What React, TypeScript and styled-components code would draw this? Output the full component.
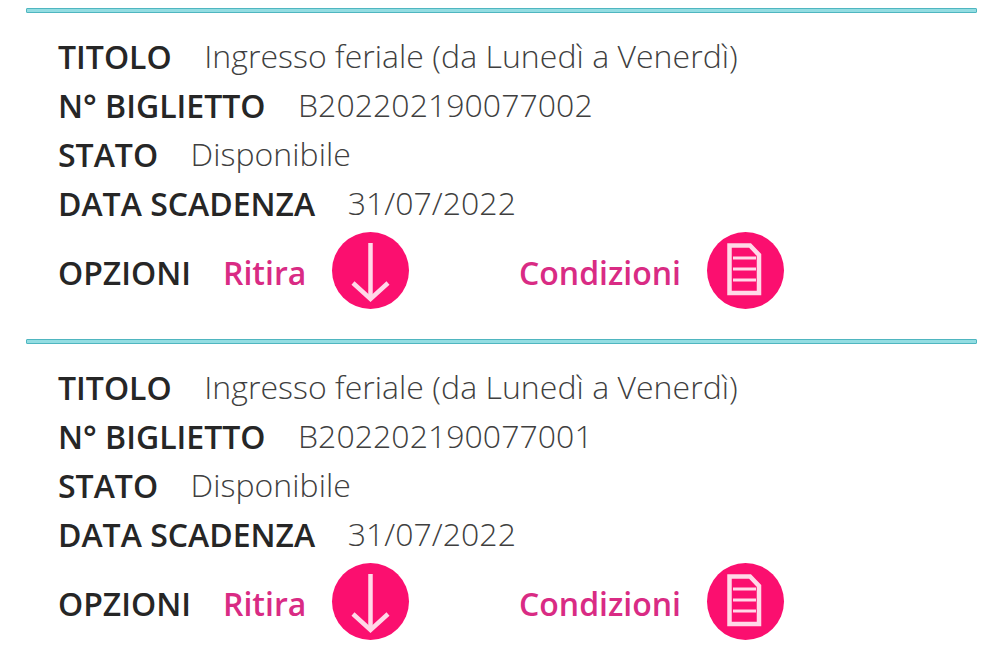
import styled, { createGlobalStyle } from 'styled-components';

const GlobalStyle = createGlobalStyle`
  html, body {
    margin: 0;
    padding: 0;
    background: #ffffff;
  }
`;

const Page = styled.div`
  width: 1000px;
  height: 651px;
  overflow: hidden;
  box-sizing: border-box;
  padding: 8px 23px 0 26px;
  font-family: 'Open Sans', 'Liberation Sans', sans-serif;
  font-size: 32px;
  color: #262626;
`;

const Ticket = styled.section`
  height: 331px;
`;

const Rule = styled.div`
  height: 5px;
  box-sizing: border-box;
  border: 1.5px solid #4fb6c0;
  border-radius: 1px;
  background: #93dde2;
`;

const Body = styled.div`
  padding: 19px 0 0 32px;
`;

const Row = styled.div`
  display: flex;
  align-items: center;
  height: 49px;
  gap: 32.5px;
  white-space: nowrap;
`;

const Label = styled.span`
  font-weight: 600;
`;

const Value = styled.span`
  font-weight: 300;
  color: #3f3f3f;
  margin-bottom: 2px;
  letter-spacing: 0.04px;
`;

const OptionsRow = styled.div`
  display: flex;
  align-items: center;
  margin-top: 4px;
  height: 77px;
  white-space: nowrap;
`;

const OptionsLabel = styled(Label)`
  width: 165px;
  margin-top: 3px;
`;

const Option = styled.div<{ $width: number }>`
  display: flex;
  align-items: center;
  justify-content: space-between;
  width: ${(p) => p.$width}px;
`;

const OptionText = styled.span`
  font-weight: 600;
  color: #d92b84;
  margin-top: 3px;
`;

const Spacer = styled.div`
  width: 110px;
`;

const Circle = styled.span`
  display: block;
  width: 77px;
  height: 77px;
  border-radius: 50%;
  background: #fb0f6f;
`;

const ArrowIcon = () => (
  <Circle>
    <svg width="77" height="77" viewBox="0 0 77 77" fill="none" stroke="#ffd9e8" strokeWidth="4.5">
      <path d="M38.500 11V66" />
      <path d="M21 51L38.500 67L56 51" />
    </svg>
  </Circle>
);

const DocIcon = () => (
  <Circle>
    <svg width="77" height="77" viewBox="0 0 77 77" fill="none" stroke="#ffd9e8" strokeWidth="4.5">
      <path d="M22.500 13.500H43L52 23V61H22.500Z" />
      <path d="M26 26H49M26 37H49M26 48H49" strokeWidth="3" />
    </svg>
  </Circle>
);

type TicketData = {
  number: string;
};

const tickets: TicketData[] = [{ number: 'B202202190077002' }, { number: 'B202202190077001' }];

const App = () => {
  return (
    <Page>
      <GlobalStyle />
      {tickets.map((t) => (
        <Ticket key={t.number}>
          <Rule />
          <Body>
            <Row>
              <Label>TITOLO</Label>
              <Value>Ingresso feriale (da Lunedì a Venerdì)</Value>
            </Row>
            <Row>
              <Label>N° BIGLIETTO</Label>
              <Value>{t.number}</Value>
            </Row>
            <Row>
              <Label>STATO</Label>
              <Value>Disponibile</Value>
            </Row>
            <Row>
              <Label>DATA SCADENZA</Label>
              <Value>31/07/2022</Value>
            </Row>
            <OptionsRow>
              <OptionsLabel>OPZIONI</OptionsLabel>
              <Option $width={186}>
                <OptionText>Ritira</OptionText>
                <ArrowIcon />
              </Option>
              <Spacer />
              <Option $width={265}>
                <OptionText>Condizioni</OptionText>
                <DocIcon />
              </Option>
            </OptionsRow>
          </Body>
        </Ticket>
      ))}
    </Page>
  );
};

export default App;
